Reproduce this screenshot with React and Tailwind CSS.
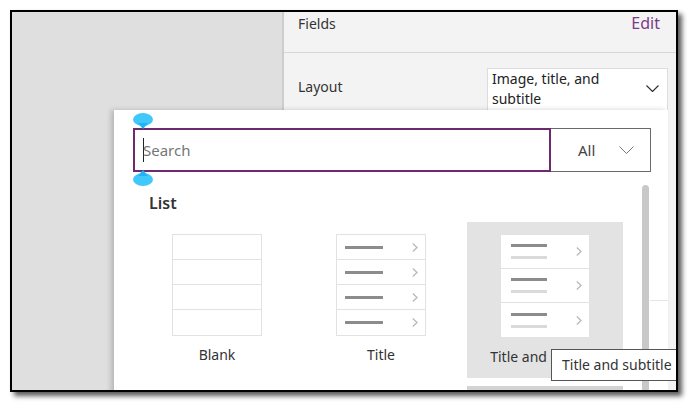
import React from "react";

const font = { fontFamily: '"Noto Sans", "Open Sans", sans-serif' };

const Chevron = ({ className = "", w = 13, h = 7, color = "#333", sw = 1.2 }) => (
  <svg width={w} height={h} viewBox={`0 0 ${w} ${h}`} className={className}>
    <polyline points={`0.5,0.5 ${w / 2},${h - 0.5} ${w - 0.5},0.5`} fill="none" stroke={color} strokeWidth={sw} />
  </svg>
);

const RowArrow = () => (
  <svg width="6" height="9" viewBox="0 0 6 9">
    <polyline points="0.8,0.6 5,4.5 0.8,8.4" fill="none" stroke="#b9b9b9" strokeWidth="1.3" />
  </svg>
);

const Handle = ({ flip }) => (
  <svg width="20" height="16" viewBox="0 0 20 16" className={flip ? "rotate-180" : ""}>
    <ellipse cx="10" cy="6.5" rx="10" ry="6.5" fill="#41c8fb" />
    <polygon points="5,10 15,10 10,16" fill="#1fb4f3" />
  </svg>
);

const BlankBox = () => (
  <div className="w-[90px] border border-[#e2e2e2] bg-white">
    {[0, 1, 2, 3].map((i) => (
      <div key={i} className={`h-[25px] ${i < 3 ? "border-b border-[#e2e2e2]" : ""}`} />
    ))}
  </div>
);

const TitleBox = () => (
  <div className="w-[90px] border border-[#e2e2e2] bg-white">
    {[0, 1, 2, 3].map((i) => (
      <div
        key={i}
        className={`flex h-[25px] items-center justify-between pl-[8px] pr-[7px] ${i < 3 ? "border-b border-[#e2e2e2]" : ""}`}
      >
        <div className="h-[3px] w-[38px] bg-[#8c8c8c]" />
        <RowArrow />
      </div>
    ))}
  </div>
);

const SubtitleBox = () => (
  <div className="w-[90px] border border-[#e2e2e2] bg-white">
    {[0, 1, 2].map((i) => (
      <div
        key={i}
        className={`flex h-[34px] items-center justify-between pl-[10px] pr-[7px] ${i < 2 ? "border-b border-[#e2e2e2]" : ""}`}
      >
        <div className="flex flex-col gap-[9px]">
          <div className="h-[3px] w-[36px] bg-[#8c8c8c]" />
          <div className="h-[3px] w-[36px] bg-[#dadada]" />
        </div>
        <RowArrow />
      </div>
    ))}
  </div>
);

const Template = ({ label, selected, children }) => (
  <div className={`flex h-[156px] flex-col items-center pt-[12px] ${selected ? "bg-[#e3e3e3]" : ""}`}>
    {children}
    <div className="mt-[8px] text-[14px] text-[#333]">{label}</div>
  </div>
);

export default function App() {
  return (
    <div className="h-[403px] w-[689px] bg-white" style={font}>
      <div className="relative ml-[10px] mt-[10px] h-[382px] w-[668px] overflow-hidden border-2 border-black bg-[#dfdfdf] shadow-[4px_4px_5px_rgba(0,0,0,0.65)]">
        <div className="flex h-full">
          <div className="w-[270px] bg-[#dfdfdf]" />
          <div className="flex-1 border-l-2 border-[#cdcdcd] bg-[#f3f3f3]">
            <div className="flex h-[41px] items-start justify-between border-b border-[#d6d6d6] pl-[14px] pr-[16px] pt-[1px]">
              <span className="text-[14px] text-[#333]">Fields</span>
              <span className="-mt-[2px] text-[16px] text-[#7b3a8a]">Edit</span>
            </div>
            <div className="flex items-start justify-between pl-[14px] pr-[8px] pt-[15px]">
              <span className="mt-[8px] text-[14px] text-[#333]">Layout</span>
              <div className="flex h-[44px] w-[181px] items-start justify-between border border-[#dcdcdc] bg-white pl-[4px] pr-[8px]">
                <span className="text-[14px] leading-[20px] text-[#222]">Image, title, and<br />subtitle</span>
                <Chevron className="mt-[16px]" />
              </div>
            </div>
          </div>
        </div>

        <div className="absolute left-[102px] top-[98px] h-[300px] w-[554px] bg-white shadow-[-3px_0_5px_rgba(0,0,0,0.18)]">
          <div className="absolute left-[19px] top-[3px]">
            <Handle />
          </div>
          <div className="absolute left-[19px] top-[60px]">
            <Handle flip />
          </div>
          <div className="ml-[19px] mt-[18px] flex h-[44px] w-[518px]">
            <div className="flex flex-1 items-center border-2 border-[#6e2a6e] pl-[8px]">
              <span className="h-[24px] w-px bg-[#222]" />
              <span className="-ml-px text-[15px] text-[#767676]">Search</span>
            </div>
            <div className="flex w-[100px] items-center justify-between border-y border-r border-[#6a6a6a] pl-[27px] pr-[16px]">
              <span className="text-[15px] text-[#444]">All</span>
              <Chevron w={15} h={8} color="#777" sw={1} />
            </div>
          </div>
          <div className="ml-[35px] mt-[19px] text-[16px] font-semibold leading-[24px] text-[#333]">List</div>
          <div className="ml-[25px] mt-[7px] grid w-[484px] grid-cols-3 gap-[8px]">
            <Template label="Blank">
              <BlankBox />
            </Template>
            <Template label="Title">
              <TitleBox />
            </Template>
            <Template label="Title and subtitle" selected>
              <SubtitleBox />
            </Template>
            <div />
            <div />
            <div className="h-[20px] bg-[#d3d3d3]" />
          </div>
          <div className="absolute left-[528px] top-[75px] h-[240px] w-[7px] rounded-t-full bg-[#c8c8c8]" />
          <div className="absolute left-[536px] top-[190px] h-px w-[18px] bg-[#e6e6e6]" />
        </div>

        <div className="absolute left-[539px] top-[337px] whitespace-nowrap border border-[#555] bg-white py-[5px] pl-[10px] pr-[10px] text-[14px] leading-[20px] text-[#333]">
          Title and subtitle
        </div>
      </div>
    </div>
  );
}
